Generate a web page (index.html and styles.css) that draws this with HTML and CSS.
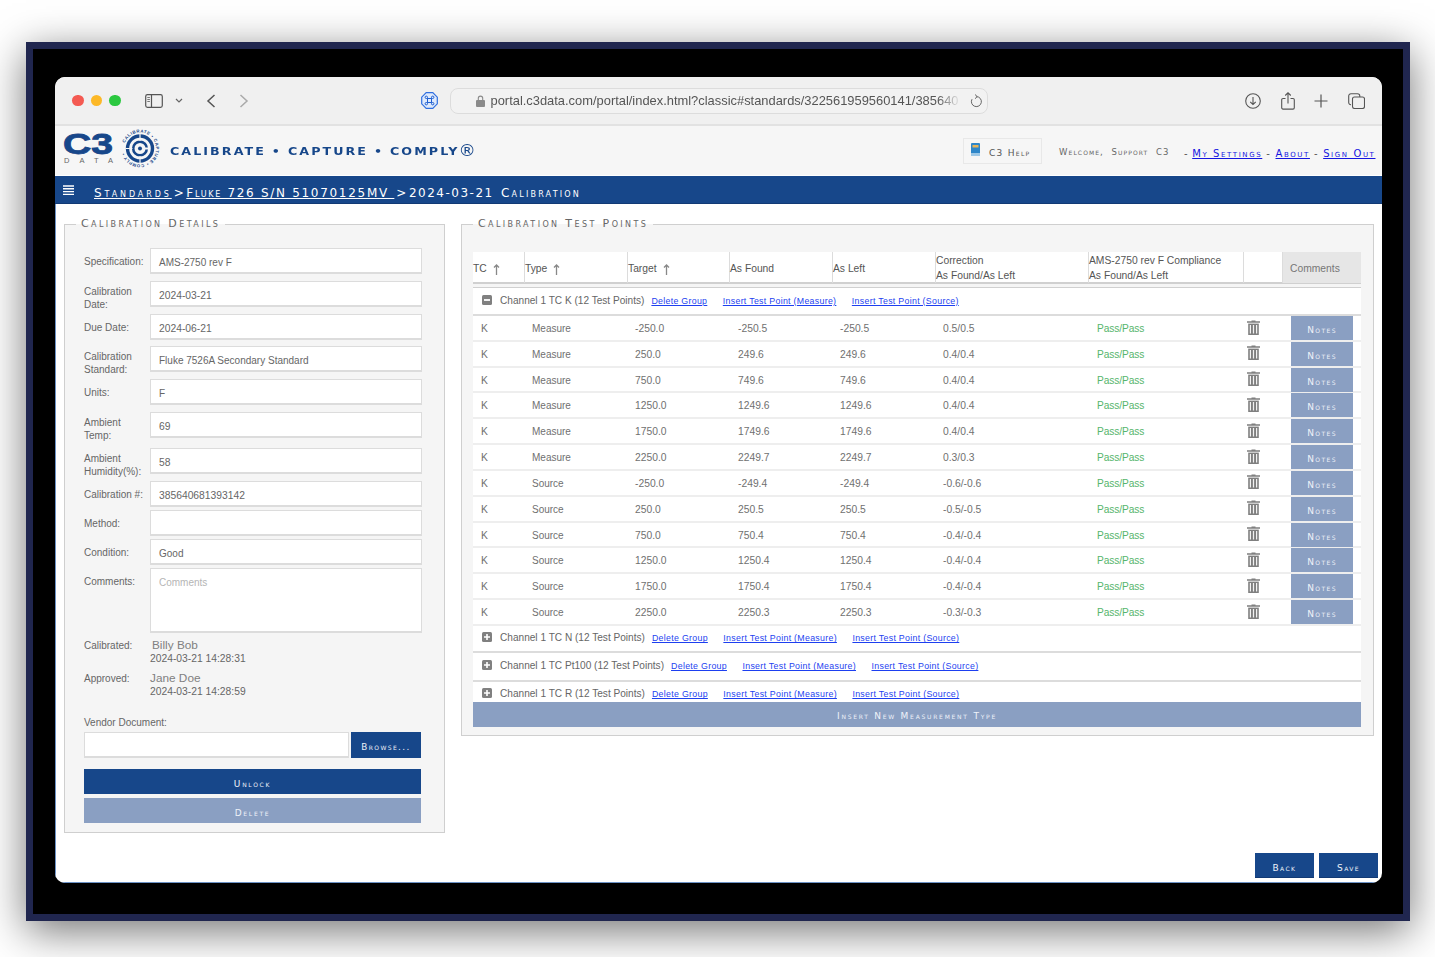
FILE: index.html
```html
<!DOCTYPE html>
<html lang="en">
<head>
<meta charset="utf-8">
<title>C3 Data Calibration</title>
<link rel="stylesheet" href="styles.css">
</head>
<body>
<svg class="defs" width="0" height="0" aria-hidden="true">
  <symbol id="trash" viewBox="0 0 13 15">
    <path d="M4.500 1.200V.4h4v.8H13v1.500H0V1.200z" fill="#7f7f7f"/>
    <path d="M1.200 3.600h10.600V15H1.200z" fill="#7f7f7f"/>
    <path d="M3.400 5v8.600M6.500 5v8.600M9.600 5v8.600" stroke="#f2f2f2" stroke-width="1.200"/>
  </symbol>
  <symbol id="plus" viewBox="0 0 10 10">
    <rect width="10" height="10" rx="1.500" fill="#808080"/>
    <path d="M2 5h6M5 2v6" stroke="#fff" stroke-width="1.600"/>
  </symbol>
  <symbol id="minus" viewBox="0 0 10 10">
    <rect width="10" height="10" rx="1.500" fill="#808080"/>
    <path d="M2 5h6" stroke="#fff" stroke-width="1.800"/>
  </symbol>
  <symbol id="up" viewBox="0 0 7 11">
    <path d="M3.500 11V1.500M1 3.500 3.500 1 6 3.500" fill="none" stroke="#888" stroke-width="1.300"/>
  </symbol>
</svg>
<div class="frame">
  <div class="window">
    <div class="toolbar">
      <span class="light red"></span><span class="light yellow"></span><span class="light green"></span>
      <svg class="ic ic-side" width="18" height="14" viewBox="0 0 18 14"><rect x=".7" y=".7" width="16.600" height="12.600" rx="1.800" fill="none" stroke="#555" stroke-width="1.200"/><path d="M6.500 1v12" stroke="#555" stroke-width="1.200"/><path d="M2.300 3.500h2.600M2.300 5.500h2.600M2.300 7.500h2.600" stroke="#777" stroke-width="1"/></svg>
      <svg class="ic ic-chev" width="8" height="5" viewBox="0 0 8 5"><path d="M1 1l3 3 3-3" fill="none" stroke="#666" stroke-width="1.200"/></svg>
      <svg class="ic ic-back" width="10" height="14" viewBox="0 0 10 14"><path d="M8.500 1 2 7l6.500 6" fill="none" stroke="#555" stroke-width="1.500"/></svg>
      <svg class="ic ic-fwd" width="10" height="14" viewBox="0 0 10 14"><path d="M1.500 1 8 7l-6.500 6" fill="none" stroke="#aaa" stroke-width="1.500"/></svg>
      <svg class="ic ic-shield" width="17" height="17" viewBox="0 0 17 17"><path d="M5.200.7h6.600l4.500 4.500v6.600l-4.500 4.500H5.200L.7 11.800V5.200z" fill="#dfeafc" stroke="#2f6fe0" stroke-width="1.200"/><path d="M6.500 6.500h4v4h-4zM6.500 6.500H5.300a1.200 1.200 0 1 1 1.200-1.200zM10.500 6.500V5.300a1.200 1.200 0 1 1 1.200 1.200zM10.500 10.500h1.200a1.200 1.200 0 1 1-1.200 1.200zM6.500 10.500v1.200a1.200 1.200 0 1 1-1.200-1.200z" fill="none" stroke="#1f5fd0" stroke-width="1"/></svg>
      <div class="urlbar">
        <svg class="ic" width="9" height="12" viewBox="0 0 9 12"><path d="M2.300 5V3.300a2.200 2.200 0 0 1 4.400 0V5" fill="none" stroke="#8a8a8a" stroke-width="1.100"/><rect y="5" width="9" height="7" rx="1" fill="#8a8a8a"/></svg>
        <span class="urltext">portal.c3data.com/portal/index.html?classic#standards/322561959560141/385640</span>
        <svg class="ic ic-reload" width="12" height="14" viewBox="0 0 12 14"><path d="M6.500 2.600A5 5 0 1 1 2 5.200" fill="none" stroke="#666" stroke-width="1"/><path d="M5 .5l2.200 2.100L5 4.700" fill="none" stroke="#666" stroke-width="1"/></svg>
      </div>
      <svg class="ic ic-dl" width="16" height="16" viewBox="0 0 16 16"><circle cx="8" cy="8" r="7.300" fill="none" stroke="#555" stroke-width="1.100"/><path d="M8 4v7.500M5.200 8.800 8 11.500l2.800-2.700" fill="none" stroke="#555" stroke-width="1.100"/></svg>
      <svg class="ic ic-share" width="14" height="18" viewBox="0 0 14 18"><path d="M4.500 6.500H2a1.300 1.300 0 0 0-1.300 1.300v8a1.300 1.300 0 0 0 1.300 1.300h10a1.300 1.300 0 0 0 1.300-1.300v-8A1.300 1.300 0 0 0 12 6.500H9.500" fill="none" stroke="#555" stroke-width="1.100"/><path d="M7 11.500V1M4.200 3.500 7 .8l2.800 2.700" fill="none" stroke="#555" stroke-width="1.100"/></svg>
      <svg class="ic ic-plus" width="14" height="14" viewBox="0 0 14 14"><path d="M7 .5v13M.5 7h13" stroke="#555" stroke-width="1.200"/></svg>
      <svg class="ic ic-tabs" width="17" height="16" viewBox="0 0 17 16"><rect x="4.500" y="4" width="12" height="11.500" rx="2" fill="none" stroke="#555" stroke-width="1.100"/><path d="M3 11.800A2.200 2.200 0 0 1 .7 9.600V3A2.300 2.300 0 0 1 3 .7h6.500A2.300 2.300 0 0 1 11.800 3v1" fill="none" stroke="#555" stroke-width="1.100"/></svg>
    </div>

    <header class="apphead">
      <svg class="logo" width="112" height="44" viewBox="0 0 112 44" role="img" aria-label="C3 Data">
        <defs><path id="ring" d="M69.960 17.030A16 16 0 1 1 100.040 27.970A16 16 0 1 1 69.960 17.030"/></defs>
        <text class="logo-c3" x="8" y="28" textLength="50" lengthAdjust="spacingAndGlyphs">C3</text>
        <text class="logo-data" x="9" y="36.500" textLength="49">DATA</text>
        <circle cx="85" cy="22.500" r="12.500" fill="none" stroke="#17478a" stroke-width="3.400"/>
        <circle cx="85" cy="22.500" r="6.800" fill="none" stroke="#17478a" stroke-width="2.600"/>
        <circle cx="85" cy="22.500" r="2" fill="#17478a"/>
        <path d="M85 8v7M85 30v7M70.500 22.500h7" stroke="#f6f6f6" stroke-width="1.200"/>
        <path d="M89 22.500h5" stroke="#f6f6f6" stroke-width="2.200"/>
        <text class="logo-ring"><textPath href="#ring">CALIBRATE • CAPTURE • COMPLY •</textPath></text>
      </svg>
      <div class="tagline">CALIBRATE <span class="dot">•</span> CAPTURE <span class="dot">•</span> COMPLY<span class="reg">®</span></div>
      <div class="helpbtn">
        <svg class="ic" width="9" height="13" viewBox="0 0 9 13"><rect width="9" height="13" rx="1" fill="#2e86c9"/><rect x="1.500" y="2" width="6" height="2.500" fill="#e6b45a"/><rect y="10" width="9" height="3" fill="#9cc7e6"/></svg>
        <span class="sc helptext">C3 Help</span>
      </div>
      <div class="welcome sc">Welcome,&nbsp; Support&nbsp; C3</div>
      <nav class="toplinks sc">
        <span>-</span><a href="#">My Settings</a><span>-</span><a href="#">About</a><span>-</span><a href="#">Sign Out</a>
      </nav>
    </header>

    <div class="crumbbar">
      <svg class="ic burger" width="11" height="11" viewBox="0 0 11 11"><path d="M0 1h11M0 3.800h11M0 6.600h11M0 9.400h11" stroke="#fff" stroke-width="1.400"/></svg>
      <div class="crumbs sc"><a class="crumb-sm" href="#">Standards</a><span class="sep">&gt;</span><a class="crumb-mid" href="#">Fluke 726 S/N 51070125MV </a><span class="sep">&gt;</span>2024-03-21 <span class="crumb-cal">Calibration</span></div>
    </div>

    <main class="content">
      <div class="panels">
        <fieldset class="panel panel-left">
          <legend class="sc">Calibration Details</legend>
          <div class="form">
            <label>Specification:</label><div class="input">AMS-2750 rev F</div>
            <label class="two">Calibration Date:</label><div class="input num">2024-03-21</div>
            <label>Due Date:</label><div class="input num">2024-06-21</div>
            <label class="two">Calibration Standard:</label><div class="input">Fluke 7526A Secondary Standard</div>
            <label>Units:</label><div class="input">F</div>
            <label class="two">Ambient Temp:</label><div class="input num">69</div>
            <label class="two">Ambient Humidity(%):</label><div class="input num">58</div>
            <label>Calibration #:</label><div class="input num">385640681393142</div>
            <label>Method:</label><div class="input"></div>
            <label>Condition:</label><div class="input">Good</div>
            <label>Comments:</label><div class="input area">Comments</div>
          </div>
          <div class="sign sign-a"><span class="sign-l">Calibrated:</span><div class="sign-v"><div class="name name-a">Billy Bob</div><div>2024-03-21 14:28:31</div></div></div>
          <div class="sign sign-b"><span class="sign-l">Approved:</span><div class="sign-v"><div class="name">Jane Doe</div><div>2024-03-21 14:28:59</div></div></div>
          <div class="vendor-label">Vendor Document:</div>
          <div class="vendor"><div class="input vendor-input"></div><button class="btn browse sc">Browse...</button></div>
          <button class="btn wide sc">Unlock</button>
          <button class="btn wide light-btn sc">Delete</button>
        </fieldset>

        <fieldset class="panel panel-right">
          <legend class="sc">Calibration Test Points</legend>
          <div class="thead">
            <div class="th">TC<svg class="up" width="7" height="11"><use href="#up"/></svg></div>
            <div class="th">Type<svg class="up" width="7" height="11"><use href="#up"/></svg></div>
            <div class="th">Target<svg class="up" width="7" height="11"><use href="#up"/></svg></div>
            <div class="th">As Found</div>
            <div class="th">As Left</div>
            <div class="th th-two">Correction<br>As Found/As Left</div>
            <div class="th th-two">AMS-2750 rev F Compliance<br>As Found/As Left</div>
            <div class="th"></div>
            <div class="th th-c">Comments</div>
          </div>
          <div class="group g-open"><svg class="toggle" width="10" height="10"><use href="#minus"/></svg><span class="gname">Channel 1 TC K (12 Test Points)</span><a href="#">Delete Group</a><a href="#">Insert Test Point (Measure)</a><a href="#">Insert Test Point (Source)</a></div>

          <div class="row"><span>K</span><span>Measure</span><span>-250.0</span><span>-250.5</span><span>-250.5</span><span>0.5/0.5</span><span class="pass">Pass/Pass</span><svg class="trash" width="13" height="15"><use href="#trash"/></svg><button class="btn notes sc">Notes</button></div>
          <div class="row"><span>K</span><span>Measure</span><span>250.0</span><span>249.6</span><span>249.6</span><span>0.4/0.4</span><span class="pass">Pass/Pass</span><svg class="trash" width="13" height="15"><use href="#trash"/></svg><button class="btn notes sc">Notes</button></div>
          <div class="row"><span>K</span><span>Measure</span><span>750.0</span><span>749.6</span><span>749.6</span><span>0.4/0.4</span><span class="pass">Pass/Pass</span><svg class="trash" width="13" height="15"><use href="#trash"/></svg><button class="btn notes sc">Notes</button></div>
          <div class="row"><span>K</span><span>Measure</span><span>1250.0</span><span>1249.6</span><span>1249.6</span><span>0.4/0.4</span><span class="pass">Pass/Pass</span><svg class="trash" width="13" height="15"><use href="#trash"/></svg><button class="btn notes sc">Notes</button></div>
          <div class="row"><span>K</span><span>Measure</span><span>1750.0</span><span>1749.6</span><span>1749.6</span><span>0.4/0.4</span><span class="pass">Pass/Pass</span><svg class="trash" width="13" height="15"><use href="#trash"/></svg><button class="btn notes sc">Notes</button></div>
          <div class="row"><span>K</span><span>Measure</span><span>2250.0</span><span>2249.7</span><span>2249.7</span><span>0.3/0.3</span><span class="pass">Pass/Pass</span><svg class="trash" width="13" height="15"><use href="#trash"/></svg><button class="btn notes sc">Notes</button></div>
          <div class="row"><span>K</span><span>Source</span><span>-250.0</span><span>-249.4</span><span>-249.4</span><span>-0.6/-0.6</span><span class="pass">Pass/Pass</span><svg class="trash" width="13" height="15"><use href="#trash"/></svg><button class="btn notes sc">Notes</button></div>
          <div class="row"><span>K</span><span>Source</span><span>250.0</span><span>250.5</span><span>250.5</span><span>-0.5/-0.5</span><span class="pass">Pass/Pass</span><svg class="trash" width="13" height="15"><use href="#trash"/></svg><button class="btn notes sc">Notes</button></div>
          <div class="row"><span>K</span><span>Source</span><span>750.0</span><span>750.4</span><span>750.4</span><span>-0.4/-0.4</span><span class="pass">Pass/Pass</span><svg class="trash" width="13" height="15"><use href="#trash"/></svg><button class="btn notes sc">Notes</button></div>
          <div class="row"><span>K</span><span>Source</span><span>1250.0</span><span>1250.4</span><span>1250.4</span><span>-0.4/-0.4</span><span class="pass">Pass/Pass</span><svg class="trash" width="13" height="15"><use href="#trash"/></svg><button class="btn notes sc">Notes</button></div>
          <div class="row"><span>K</span><span>Source</span><span>1750.0</span><span>1750.4</span><span>1750.4</span><span>-0.4/-0.4</span><span class="pass">Pass/Pass</span><svg class="trash" width="13" height="15"><use href="#trash"/></svg><button class="btn notes sc">Notes</button></div>
          <div class="row"><span>K</span><span>Source</span><span>2250.0</span><span>2250.3</span><span>2250.3</span><span>-0.3/-0.3</span><span class="pass">Pass/Pass</span><svg class="trash" width="13" height="15"><use href="#trash"/></svg><button class="btn notes sc">Notes</button></div>

          <div class="group g-n"><svg class="toggle" width="10" height="10"><use href="#plus"/></svg><span class="gname">Channel 1 TC N (12 Test Points)</span><a href="#">Delete Group</a><a href="#">Insert Test Point (Measure)</a><a href="#">Insert Test Point (Source)</a></div>
          <div class="group g-p"><svg class="toggle" width="10" height="10"><use href="#plus"/></svg><span class="gname">Channel 1 TC Pt100 (12 Test Points)</span><a href="#">Delete Group</a><a href="#">Insert Test Point (Measure)</a><a href="#">Insert Test Point (Source)</a></div>
          <div class="group g-r"><svg class="toggle" width="10" height="10"><use href="#plus"/></svg><span class="gname">Channel 1 TC R (12 Test Points)</span><a href="#">Delete Group</a><a href="#">Insert Test Point (Measure)</a><a href="#">Insert Test Point (Source)</a></div>
          <button class="btn insert sc">Insert New Measurement Type</button>
        </fieldset>
      </div>
      <div class="footer">
        <button class="btn foot sc">Back</button>
        <button class="btn foot sc">Save</button>
      </div>
    </main>
  </div>
</div>
</body>
</html>
```

FILE: styles.css
```css
* { box-sizing: border-box; }
html, body { margin: 0; height: 957px; overflow: hidden; }
body {
  background: #fff;
  padding: 42px 25px 36px 26px;
  font-family: "Liberation Sans", Arial, sans-serif;
  font-size: 10.300px;
  color: #666;
}
.defs { position: absolute; }
.ic { display: block; flex: none; }
.sc {
  font-family: "DejaVu Sans", Verdana, sans-serif;
  font-variant: small-caps;
  letter-spacing: 1px;
}

/* outer frame */
.frame {
  height: 879px;
  background: #000;
  border: 7px solid #20264f;
  padding: 28px 21px 31px 22px;
  box-shadow: 0 10px 40px rgba(0, 0, 0, .55);
}
.window {
  height: 806px;
  border-radius: 10px;
  overflow: hidden;
  background: #fff;
  display: flex;
  flex-direction: column;
}

/* browser toolbar */
.toolbar {
  height: 49px;
  flex: none;
  background: #f0f0f0;
  border-bottom: 2px solid #e2e2e2;
  display: flex;
  align-items: center;
  padding-left: 17px;
}
.light { width: 11.500px; height: 11.500px; border-radius: 50%; margin-right: 7px; flex: none; }
.red { background: #f45a52; }
.yellow { background: #fcb827; }
.green { background: #2bc840; }
.ic-side { margin-left: 17px; }
.ic-chev { margin-left: 12px; }
.ic-back { margin-left: 23px; }
.ic-fwd { margin-left: 23px; }
.ic-shield { margin-left: 172px; }
.urlbar {
  margin-left: 12px;
  width: 538px;
  height: 26px;
  border: 1.500px solid #dcdcdc;
  border-radius: 8px;
  background: #f2f2f2;
  display: flex;
  align-items: center;
  padding-left: 25px;
}
.urltext {
  margin-left: 6px;
  width: 470px;
  white-space: nowrap;
  font-size: 12.900px;
  color: #555;
  -webkit-mask-image: linear-gradient(to right, #000 95%, transparent 100%);
  mask-image: linear-gradient(to right, #000 95%, transparent 100%);
}
.ic-reload { margin-left: 9px; }
.ic-dl { margin-left: 257px; }
.ic-share { margin-left: 20px; }
.ic-plus { margin-left: 19px; }
.ic-tabs { margin-left: 20px; }

/* app header */
.apphead {
  height: 50px;
  flex: none;
  background: #f6f6f6;
  display: flex;
  align-items: center;
  border-bottom: 1px solid #fff;
}
.logo { display: block; flex: none; overflow: visible; margin-top: -5px; }
.logo-c3 {
  font-family: "Liberation Sans", sans-serif;
  font-weight: 700;
  font-size: 29px;
  fill: #17478a;
  stroke: #17478a;
  stroke-width: .8px;
}
.logo-data { font-family: "Liberation Sans", sans-serif; font-size: 7.500px; fill: #666; }
.logo-ring { font-family: "Liberation Sans", sans-serif; font-size: 4.300px; font-weight: 700; fill: #17478a; letter-spacing: .55px; }
.tagline {
  margin-left: 3px;
  margin-top: 2px;
  width: 320px;
  font-family: "DejaVu Sans", Verdana, sans-serif;
  font-size: 11px;
  line-height: 14px;
  font-weight: 700;
  letter-spacing: 1.800px;
  color: #17478a;
  white-space: nowrap;
  transform: scaleX(1.15);
  transform-origin: left center;
}
.tagline .dot { margin: 0 -.5px; }
.tagline .reg { font-weight: 400; font-size: 15px; line-height: 10px; letter-spacing: 0; vertical-align: -1px; margin-left: -1px; }
.helpbtn {
  margin-left: 473px;
  margin-top: 1px;
  width: 79px;
  height: 26px;
  border: 1px solid #e8e8e8;
  display: flex;
  align-items: center;
  padding: 0 0 3px 7px;
}
.helptext { font-size: 9px; letter-spacing: 1.300px; color: #555; margin: 6px 0 0 9px; white-space: nowrap; }
.welcome { margin-left: 17px; margin-top: 2px; width: 125px; font-size: 8.500px; letter-spacing: 1.100px; color: #666; white-space: nowrap; }
.toplinks { font-size: 10px; display: flex; gap: 3px; color: #555; white-space: nowrap; letter-spacing: 1.600px; margin-top: 6px; }
.toplinks a { color: #1414e0; }
.toplinks a + span { margin: 0 1px; }

/* breadcrumb bar */
.crumbbar {
  height: 28px;
  flex: none;
  background: #17478a;
  border-bottom: 1px solid #123a74;
  display: flex;
  align-items: center;
  color: #fff;
  padding-left: 8px;
}
.burger { margin-top: 1px; }
.crumbs { margin-left: 20px; font-size: 12px; letter-spacing: 1.500px; white-space: pre; margin-top: 7px; }
.crumbs a { color: #fff; }
.crumb-sm { letter-spacing: 2.900px; }
.crumb-mid { letter-spacing: 1.700px; }
.crumb-cal { letter-spacing: 2.200px; margin-left: 2px; }
.sep { margin: 0 1px 0 2px; }

/* content */
.content {
  flex: 1;
  min-height: 0;
  display: flex;
  flex-direction: column;
  border-left: 1px solid #6c92c6;
  border-bottom: 1px solid #6c92c6;
  padding: 13px 0 4px 8px;
}
.panels { display: flex; gap: 16px; align-items: flex-start; }
.panel {
  margin: 0;
  min-width: 0;
  padding: 0;
  border: 1px solid #cfcfcf;
  background: #f5f5f5;
}
.panel legend {
  padding: 0 5px;
  font-size: 11px;
  line-height: 14px;
  letter-spacing: 2.400px;
  color: #666;
  white-space: nowrap;
}
.panel-left { width: 381px; height: 616px; padding: 17px 23px 0 19px; }
.panel-left legend { margin-left: -8px; }
.panel-right { width: 913px; height: 519px; padding: 21px 0 0 11px; }

/* left form */
.form {
  display: grid;
  grid-template-columns: 66px 272px;
  grid-template-rows: 33px 33px 32px 33px 33px 36px 33px 29px 29px 29px 70px;
  font-size: 10px;
}
.form label { line-height: 13px; padding-top: 7px; color: #666; }
.form label.two { padding-top: 3.500px; }
.input {
  height: 26px;
  background: #fff;
  border: 1px solid #dcdcdc;
  border-bottom-width: 2px;
  padding-left: 8px;
  line-height: 27px;
  font-size: 10px;
  color: #666;
}
.input.num { font-size: 10.300px; }
.area { height: 64.500px; line-height: 27px; color: #b5b5b5; }
.sign { display: flex; line-height: 13.500px; color: #666; }
.sign-l { width: 66px; flex: none; padding-top: 1px; font-size: 10px; }
.sign-b { margin-top: 5px; }
.name { font-size: 11.800px; line-height: 14px; color: #808080; }
.name-a { padding-left: 2px; }
.vendor-label { margin-top: 18px; line-height: 14px; font-size: 10px; }
.vendor { display: flex; gap: 2px; margin-top: 2px; margin-bottom: 11px; }
.vendor-input { width: 265px; }

.btn {
  border: 0;
  padding: 0;
  display: block;
  background: #17478a;
  color: #eef2f9;
  font-size: 9px;
  letter-spacing: 1.400px;
  cursor: pointer;
}
.browse { width: 70px; height: 26px; padding-top: 4px; font-size: 8.800px; }
.wide { width: 337px; height: 25px; padding-top: 5px; margin-bottom: 4px; letter-spacing: 1.700px; }
.light-btn { background: #8a9fc2; }

/* right table */
.thead, .row { display: grid; grid-template-columns: 51px 103px 102px 103px 103px 153px 155px 39px 79px; width: 888px; }
.thead {
  height: 32px;
  background: #fff;
  border-bottom: 2px solid #d0d0d0;
  font-size: 10.300px;
  line-height: 14.500px;
  color: #555;
}
.th { border-left: 1px solid #dcdcdc; display: flex; align-items: center; padding: 4px 0 0; }
.th:first-child { border-left: 0; }
.th-two { display: block; padding-top: 2px; }
.th-c { background: #e6e6e6; color: #777; padding-left: 7px; }
.up { margin-left: 6px; display: block; }

.group {
  width: 888px;
  background: #fff;
  display: flex;
  align-items: center;
  padding-left: 9px;
  border-bottom: 2px solid #dcdcdc;
  white-space: nowrap;
}
.g-open { height: 29px; margin-top: 3px; border-top: 1px solid #d0d0d0; }
.g-n { height: 27px; }
.g-p { height: 29px; }
.g-r { height: 20px; border-bottom: 0; padding-top: 5px; }
.toggle { display: block; flex: none; margin-right: 8px; margin-top: -2px; }
.gname { margin-right: 7px; font-size: 10.100px; color: #666; margin-top: -2px; }
.group a { font-size: 8.800px; letter-spacing: .3px; color: #1d3ff0; margin-right: 15.500px; }

.row {
  height: 25.830px;
  background: #fff;
  border-bottom: 2px solid #eeeeee;
  align-items: center;
  color: #707070;
}
.row > span { padding-left: 8px; padding-top: 1px; }
.row > span:nth-child(2) { font-size: 10px; }
.row > span:nth-child(4) { padding-left: 9px; }
.row > .pass { padding-left: 9px; color: #56b56c; font-size: 10.200px; letter-spacing: -.1px; }
.trash { display: block; margin-left: 4px; margin-top: -2px; }
.notes {
  margin-left: 9px;
  width: 62px;
  height: 24px;
  align-self: start;
  background: #8a9fc2;
  padding-top: 4px;
}
.insert { width: 888px; height: 25px; background: #8a9fc2; padding-top: 3px; letter-spacing: 1.750px; }

/* footer */
.footer { margin-top: auto; display: flex; justify-content: flex-end; gap: 5px; padding-right: 4px; }
.foot { width: 59px; height: 25px; padding-top: 6px; border-bottom: 1px solid #123a74; }
```
